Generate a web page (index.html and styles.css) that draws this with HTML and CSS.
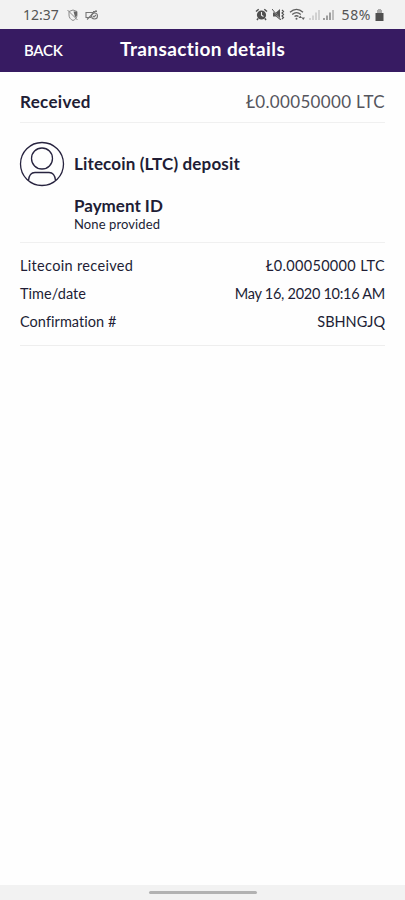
FILE: index.html
```html
<!DOCTYPE html>
<html lang="en">
<head>
<meta charset="utf-8">
<meta name="viewport" content="width=device-width, initial-scale=1">
<title>Transaction details</title>
<link rel="stylesheet" href="styles.css">
</head>
<body>
<div class="screen">
  <div class="status">
    <div class="status-left">
      <span class="clock">12:37</span>
      <svg class="shield" width="12" height="12" viewBox="0 0 12 12" fill="none" stroke="#888"><path d="M2 2.500 6 1l4 1.500v3.500C10 8.500 8.500 10.500 6 11.500 3.500 10.500 2 8.500 2 6zM.5 1l10 10"/><path d="M6.500 2.500h3.500v4L8 8.500 7.500 6z" fill="#666" stroke="none"/></svg>
      <svg class="device" width="14" height="12" viewBox="0 0 14 12" fill="none" stroke="#777" stroke-width="1.100"><path d="M8 3.500H1v5h5M2 10.500l8-8M8 2.500h4M11 1v2"/><circle cx="9.500" cy="7" r="3"/><path d="m8 7 1 1 2-2"/></svg>
    </div>
    <div class="status-right">
      <svg width="13" height="13" viewBox="0 0 13 13"><circle cx="6.500" cy="7" r="4.600" fill="#505050"/><path d="m1 3.500 2.700-2.300M12 3.500 9.300 1.200M3 10.500l-1 1.500M10 10.500l1 1.500" stroke="#505050" stroke-width="1.500"/><path d="M6.500 4v3.300l2 1.200" fill="none" stroke="#eee" stroke-width="1.100"/></svg>
      <svg class="mute" width="13" height="13" viewBox="0 0 13 13"><path d="M1 4.500h3l4-3.500v11L4 8.500H1z" fill="#555"/><path d="m.5 1.500 8 10" stroke="#eee" stroke-width="1.200"/><path d="m0 1 9 11" stroke="#555"/><path d="m10 2 1.500 1.500L10 5l1.500 1.500L10 8l1.500 1.500L10 11" fill="none" stroke="#555" stroke-width="1.200"/></svg>
      <svg class="wifi" width="17" height="13" viewBox="0 0 17 13" fill="none" stroke="#606060" stroke-width="1.300"><path d="M1 4.200c4-3.600 9-3.600 13 0M3.200 6.500c2.700-2.300 6-2.300 8.600 0M5.500 8.600c1.300-1.100 2.800-1.100 4 0"/><circle cx="7.500" cy="10.700" r="1" fill="#606060" stroke="none"/><path d="m9.500 10 1.800-2.500L13 10zM12.500 9.500H16L14.200 12z" fill="#606060" stroke="none"/></svg>
      <svg class="signal" width="11" height="12" viewBox="0 0 11 12" stroke="#bbb" stroke-width="1.200"><path d="M1 11V9M4 11V6.500M7 11V3.500M10 11V1"/></svg>
      <svg class="signal" width="11" height="12" viewBox="0 0 11 12" stroke-width="1.200"><path stroke="#666" d="M1 11V9M4 11V6.500M7 11V3.500"/><path stroke="#999" d="M10 11V1"/></svg>
      <span class="percent">58%</span>
      <svg class="battery" width="9" height="12" viewBox="0 0 9 12"><path d="M3 0h3v1h1v3H2V1h1z" fill="#aaa"/><path d="M.5 4h8v8h-8z" fill="#505050"/></svg>
    </div>
  </div>
  <header class="bar">
    <span class="back">BACK</span>
    <h1 class="title">Transaction details</h1>
  </header>
  <main class="content">
    <section class="summary">
      <span class="received">Received</span>
      <span class="amount">Ł0.00050000 LTC</span>
    </section>
    <section class="deposit">
      <svg class="avatar" width="46" height="46" viewBox="0 0 46 46" fill="none" stroke="#27233f" stroke-width="1.300"><circle cx="23" cy="23" r="21.500"/><circle cx="23" cy="17.500" r="10.500"/><path d="M9.500 39.500C10 34 12 31.500 16 31.500h14c4 0 6 2.500 6.500 8"/></svg>
      <div class="info">
        <div class="name">Litecoin (LTC) deposit</div>
        <div class="payment">Payment ID</div>
        <div class="none">None provided</div>
      </div>
    </section>
    <section class="rows">
      <div class="row"><span class="label-asset">Litecoin received</span><span class="value-asset">Ł0.00050000 LTC</span></div>
      <div class="row"><span class="label">Time/date</span><span class="value-date">May 16, 2020 10:16 AM</span></div>
      <div class="row"><span class="label">Confirmation #</span><span>SBHNGJQ</span></div>
    </section>
  </main>
  <footer class="nav"><div class="handle"></div></footer>
</div>
</body>
</html>
```
FILE: styles.css
```css
* { box-sizing: border-box; }
body { margin: 0; background: #fefefe; color: #211d35; font-family: Lato, "Liberation Sans", sans-serif; font-variant-ligatures: none; }
.screen { height: 900px; display: flex; flex-direction: column; white-space: nowrap; }
.status { height: 29px; background: #f2f2f2; display: flex; justify-content: space-between; padding: 0 21px 0 23px; color: #555; font: 14px/29px "Noto Sans", sans-serif; }
.status-left, .status-right { display: flex; align-items: center; }
.shield { margin-left: 8px; }
.device { margin-left: 6px; }
.mute { margin-left: 4px; }
.wifi { margin-left: 4px; }
.signal { margin-left: 3px; }
.percent { margin-left: 8px; letter-spacing: .6px; }
.battery { margin-left: 4px; }
.bar { height: 43px; background: #371b62; color: #fff; display: flex; align-items: center; padding: 0 24px; }
.back { width: 96px; margin-bottom: 2px; font-size: 15px; line-height: 20px; font-weight: 600; letter-spacing: -.3px; }
.title { margin: 0 0 3px; font-size: 19px; line-height: 24px; font-weight: 700; letter-spacing: .4px; }
.content { flex: 1; padding: 0 20px; }
.summary { height: 51px; border-bottom: 1px solid #f0f0f0; display: flex; justify-content: space-between; padding-top: 18px; line-height: 24px; font-size: 17px; }
.received { font-weight: 700; letter-spacing: .3px; }
.amount { color: #55555d; letter-spacing: .33px; }
.deposit { height: 120px; border-bottom: 1px solid #f0f0f0; display: flex; padding-top: 18px; }
.avatar { margin-left: -1px; }
.info { margin-left: 9px; }
.name { font-size: 17px; line-height: 24px; font-weight: 700; padding-top: 11px; letter-spacing: .16px; }
.payment { font-size: 17px; line-height: 22px; font-weight: 700; margin-top: 19px; }
.none { font-size: 13px; line-height: 15px; letter-spacing: .1px; }
.rows { height: 103px; border-bottom: 1px solid #eee; padding-top: 9px; }
.row { height: 28px; line-height: 28px; display: flex; justify-content: space-between; font-size: 14.500px; }
.label { letter-spacing: .05px; }
.label-asset, .value-asset { letter-spacing: .33px; }
.value-date { letter-spacing: -.28px; }
.nav { height: 15px; background: #f2f2f2; padding-top: 6px; }
.handle { width: 108px; height: 3px; margin: 0 auto; border-radius: 2px; background: #b2b2b2; }
```
